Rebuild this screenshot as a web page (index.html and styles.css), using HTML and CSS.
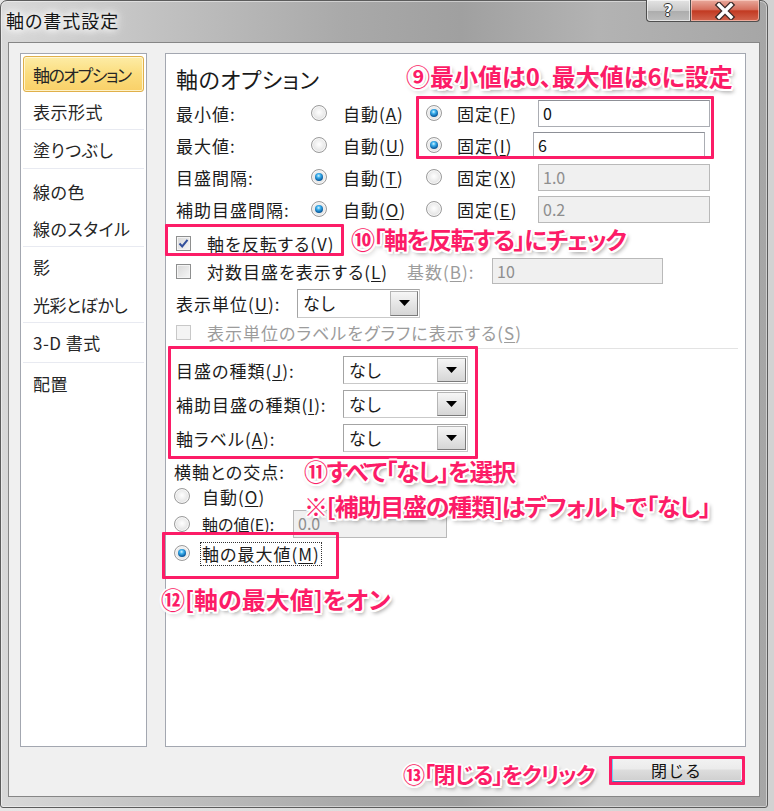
FILE: index.html
```html
<!DOCTYPE html>
<html lang="ja">
<head>
<meta charset="utf-8">
<title>軸の書式設定</title>
<link rel="stylesheet" href="styles.css">
</head>
<body>
<div class="window">
  <div class="titlebar">
    <span class="title">軸の書式設定</span>
    <div class="caption-btns">
      <span class="cbtn help">?</span>
      <span class="cbtn close"><svg width="22" height="18" viewBox="0 0 22 18"><path d="M5 3 L17 15 M17 3 L5 15" stroke="#3b2a28" stroke-width="6" stroke-linecap="square"/><path d="M5 3 L17 15 M17 3 L5 15" stroke="#ffffff" stroke-width="3.4" stroke-linecap="square"/></svg></span>
    </div>
  </div>
  <div class="client">
    <ul class="nav">
      <li class="sel">軸のオプション</li>
      <li class="sep">表示形式</li>
      <li class="sep">塗りつぶし</li>
      <li>線の色</li>
      <li class="sep">線のスタイル</li>
      <li>影</li>
      <li class="sep">光彩とぼかし</li>
      <li class="sep">3-D 書式</li>
      <li>配置</li>
    </ul>
    <div class="panel">
      <h2 class="heading">軸のオプション</h2>
      <div class="opt-rows">
        <div class="row h32">
          <span class="lbl w135">最小値:</span>
          <span class="radio"></span><span class="rtxt ra">自動(<u>A</u>)</span>
          <span class="radio on"></span><span class="rtxt rb">固定(<u>F</u>)</span>
          <span class="field">0</span>
        </div>
        <div class="row h32">
          <span class="lbl w135">最大値:</span>
          <span class="radio"></span><span class="rtxt ra">自動(<u>U</u>)</span>
          <span class="radio on"></span><span class="rtxt rb">固定(<u>I</u>)</span>
          <span class="field shifted">6</span>
        </div>
        <div class="row h32">
          <span class="lbl w135">目盛間隔:</span>
          <span class="radio on"></span><span class="rtxt ra">自動(<u>T</u>)</span>
          <span class="radio"></span><span class="rtxt rb">固定(<u>X</u>)</span>
          <span class="field off">1.0</span>
        </div>
        <div class="row h32">
          <span class="lbl w135">補助目盛間隔:</span>
          <span class="radio on"></span><span class="rtxt ra">自動(<u>O</u>)</span>
          <span class="radio"></span><span class="rtxt rb">固定(<u>E</u>)</span>
          <span class="field off">0.2</span>
        </div>
      </div>

      <div class="row h28 mt4">
        <span class="check on"><svg width="13" height="13" viewBox="0 0 13 13"><path d="M2.5 6.5 L5.2 9.4 L10.5 2.8" fill="none" stroke="#33509c" stroke-width="2"/></svg></span>
        <span class="ctxt">軸を反転する(<u>V</u>)</span>
      </div>
      <div class="row h28">
        <span class="check"></span>
        <span class="ctxt w200">対数目盛を表示する(<u>L</u>)</span>
        <span class="dis w85">基数(<u>B</u>):</span>
        <span class="field off w171">10</span>
      </div>
      <div class="row h32 mt2">
        <span class="lbl w121">表示単位(<u>U</u>):</span>
        <span class="select w123"><span class="val">なし</span><span class="dd"><svg width="11" height="6" viewBox="0 0 11 6"><polygon points="0,0 11,0 5.5,6" fill="#000"/></svg></span></span>
      </div>
      <div class="row h26">
        <span class="check off"></span>
        <span class="ctxt dis">表示単位のラベルをグラフに表示する(<u>S</u>)</span>
      </div>
      <div class="divider"></div>

      <div class="sel-rows">
        <div class="row h34">
          <span class="lbl w167">目盛の種類(<u>J</u>):</span>
          <span class="select w125"><span class="val">なし</span><span class="dd"><svg width="11" height="6" viewBox="0 0 11 6"><polygon points="0,0 11,0 5.5,6" fill="#000"/></svg></span></span>
        </div>
        <div class="row h34">
          <span class="lbl w167">補助目盛の種類(<u>I</u>):</span>
          <span class="select w125"><span class="val">なし</span><span class="dd"><svg width="11" height="6" viewBox="0 0 11 6"><polygon points="0,0 11,0 5.5,6" fill="#000"/></svg></span></span>
        </div>
        <div class="row h34">
          <span class="lbl w167">軸ラベル(<u>A</u>):</span>
          <span class="select w125"><span class="val">なし</span><span class="dd"><svg width="11" height="6" viewBox="0 0 11 6"><polygon points="0,0 11,0 5.5,6" fill="#000"/></svg></span></span>
        </div>
      </div>

      <div class="cross">
        <div class="row h24"><span class="lbl">横軸との交点:</span></div>
        <div class="row h26"><span class="radio"></span><span class="xtxt">自動(<u>O</u>)</span></div>
        <div class="row h30"><span class="radio"></span><span class="xtxt w91">軸の値(<u>E</u>):</span><span class="field off w154">0.0</span></div>
        <div class="row h28"><span class="radio on"></span><span class="xtxt"><span class="focus">軸の最大値(<u>M</u>)</span></span></div>
      </div>
    </div>
    <div class="footer">
      <button class="close-btn">閉じる</button>
    </div>
  </div>

  <div class="hl hl1"></div>
  <div class="hl hl2"></div>
  <div class="hl hl3"></div>
  <div class="hl hl4"></div>
  <div class="hl hl5"></div>

  <div class="note n9">⑨最小値は0、最大値は6に設定</div>
  <div class="note n10">⑩「軸を反転する」にチェック</div>
  <div class="note n11">⑪すべて「なし」を選択</div>
  <div class="note n11b">※[補助目盛の種類]はデフォルトで「なし」</div>
  <div class="note n12">⑫[軸の最大値]をオン</div>
  <div class="note n13">⑬「閉じる」をクリック</div>
</div>
</body>
</html>
```

FILE: styles.css
```css
* { box-sizing: border-box; }
html, body { margin: 0; padding: 0; }
body {
  width: 774px;
  height: 811px;
  overflow: hidden;
  background: linear-gradient(90deg, #e6e6e6, #d2d2d2);
  font-family: "Noto Sans CJK JP", "Noto Sans", sans-serif;
  font-size: 17px;
  letter-spacing: 1px;
  font-feature-settings: "palt";
  color: #1c1c1c;
}

/* ---------- window frame ---------- */
.window {
  position: relative;
  width: 768px;
  height: 808px;
  display: flex;
  flex-direction: column;
  border: 1px solid #5c5c5c;
  border-radius: 7px 7px 3px 3px;
  background: linear-gradient(90deg, #d9d9d9 0%, #c2c2c2 20%, #a9a9a9 45%, #a0a0a0 60%, #b3b3b3 78%, #a6a6a6 100%);
  box-shadow: inset 0 0 0 1px rgba(255,255,255,0.45);
  padding: 0 7px 10px 7px;
}
.titlebar {
  height: 41px;
  margin: 0 -7px;
  padding: 0 7px 0 5px;
  display: flex;
  justify-content: space-between;
  align-items: flex-start;
}
.title {
  font-size: 18px;
  letter-spacing: 1px;
  line-height: 38px;
  color: #151515;
  text-shadow: 0 0 6px #fff, 0 0 10px #fff, 0 0 14px #fff;
}
.caption-btns {
  display: flex;
  margin-top: -1px;
}
.cbtn {
  height: 22px;
  display: flex;
  align-items: center;
  justify-content: center;
  border: 1px solid #4f4f4f;
  border-top: none;
}
.cbtn.help {
  width: 44px;
  border-radius: 0 0 0 4px;
  border-right: none;
  background: linear-gradient(180deg, #e4e4e4 0%, #c9c9c9 50%, #acacac 51%, #bdbdbd 100%);
  box-shadow: inset 0 0 0 1px rgba(255,255,255,0.6);
  font-family: "DejaVu Sans", sans-serif;
  font-weight: 700;
  font-size: 15px;
  color: #fff;
  text-shadow: -1px 0 #333, 1px 0 #333, 0 -1px #333, 0 1px #333;
}
.cbtn.close {
  width: 70px;
  border-radius: 0 0 4px 0;
  background: linear-gradient(180deg, #e9a99c 0%, #d6705e 45%, #c23a22 52%, #d2654f 100%);
  box-shadow: inset 0 0 0 1px rgba(255,220,210,0.6);
}

/* ---------- client ---------- */
.client {
  flex: 1;
  background: #f0f0f0;
  border: 1px solid #868686;
  display: grid;
  grid-template-columns: 127px 581px;
  grid-template-rows: 694px auto;
  column-gap: 18px;
  row-gap: 10px;
  padding: 10px 0 0 11px;
}

/* ---------- nav ---------- */
.nav {
  list-style: none;
  margin: 0;
  padding: 1px 2px;
  background: #fff;
  border: 1px solid #a3a7b0;
}
.nav li {
  height: 38px;
  display: flex;
  align-items: center;
  padding-left: 10px;
  font-size: 17px;
  letter-spacing: 0.5px;
  white-space: nowrap;
  color: #262626;
}
.nav li.sep { border-bottom: 1px solid #e8eaf1; }
.nav li:nth-child(2) { height: 37px; }
.nav li:nth-child(3) { height: 39px; }
.nav li:nth-child(4) { height: 41px; padding-top: 4px; }
.nav li:nth-child(5) { height: 37px; }
.nav li:nth-child(6) { height: 39px; }
.nav li:nth-child(7) { height: 37px; letter-spacing: -0.5px; }
.nav li:nth-child(8) { height: 40px; }
.nav li:nth-child(9) { height: 40px; }
.nav li.sel {
  height: 36px;
  margin: 1px 0;
  padding-left: 9px;
  letter-spacing: -1.5px;
  border: 1px solid #e0b04a;
  border-radius: 3px;
  background: linear-gradient(180deg, #fdeca6 0%, #fbdd7e 50%, #f9d068 100%);
  box-shadow: inset 0 0 0 1px rgba(255,250,225,0.8);
}

/* ---------- panel ---------- */
.panel {
  background: #fff;
  border: 1px solid #a3a7b0;
  padding: 10px 0 0 10px;
}
.heading {
  margin: 0;
  height: 28px;
  line-height: 28px;
  font-size: 22px;
  font-weight: 400;
  letter-spacing: 0.5px;
  color: #1a1a1a;
}
.opt-rows { margin-top: 5px; }
.row {
  display: flex;
  align-items: center;
  white-space: nowrap;
}
.h24 { height: 24px; }
.h26 { height: 26px; }
.h28 { height: 28px; }
.h30 { height: 30px; }
.h32 { height: 32px; }
.h34 { height: 34px; }
.mt2 { margin-top: 2px; }
.mt4 { margin-top: 4px; }

u { text-decoration-thickness: 1px; text-underline-offset: 2px; }

.lbl { flex: none; }
.w85 { width: 85px; flex: none; }
.w121 { width: 121px; }
.w135 { width: 135px; }
.w167 { width: 167px; }

.rtxt { flex: none; }
.rtxt.ra { width: 99px; padding-left: 16px; }
.rtxt.rb { width: 96px; padding-left: 15px; }

/* radio */
.radio {
  flex: none;
  position: relative;
  width: 16px;
  height: 16px;
  border-radius: 50%;
  border: 1px solid #9b9b9b;
  background: radial-gradient(circle at 50% 45%, #ffffff 0%, #f1f1f1 35%, #d4d4d4 100%);
  box-shadow: inset 0 0 0 1px rgba(255,255,255,0.7);
}
.radio.on::after {
  content: "";
  position: absolute;
  left: 3px;
  top: 3px;
  width: 8px;
  height: 8px;
  border-radius: 50%;
  background: radial-gradient(circle at 45% 35%, #d6f4ff 0%, #3fb2ee 28%, #0d64a8 65%, #053a6a 100%);
}

/* checkbox */
.check {
  flex: none;
  width: 15px;
  height: 15px;
  display: flex;
  align-items: center;
  justify-content: center;
  border: 1px solid #8e8f8f;
  background: linear-gradient(135deg, #d8d8d8 0%, #f6f6f6 100%);
  box-shadow: inset 0 0 0 1px #f4f4f4;
}
.check.off {
  border-color: #c8c8c8;
  background: #f4f4f4;
}
.ctxt { padding-left: 16px; flex: none; }
.ctxt.w200 { width: 216px; }
.dis { color: #9c9c9c; }

/* text fields */
.field {
  flex: none;
  width: 172px;
  height: 27px;
  border: 1px solid #abadb3;
  border-top-color: #8d9097;
  background: #fff;
  padding-left: 4px;
  font-size: 16px;
  letter-spacing: 0;
  line-height: 25px;
  color: #111;
}
.field.shifted { margin-left: -5px; }
.field.off {
  background: #f0f0f0;
  border-color: #b9b9b9;
  color: #8e8e8e;
}
.field.w171 { width: 171px; height: 26px; }
.field.w154 { width: 154px; height: 28px; }

/* select */
.select {
  flex: none;
  display: flex;
  height: 29px;
  border: 1px solid #a4a4a4;
  border-bottom-color: #c9c9c9;
  border-right-color: #c9c9c9;
  background: #fff;
}
.w123 { width: 123px; }
.w125 { width: 125px; height: 28px; }
.select .val {
  flex: 1;
  padding-left: 5px;
  line-height: 26px;
  font-size: 17px;
}
.select .dd {
  width: 28px;
  margin: 1px;
  display: flex;
  align-items: center;
  justify-content: center;
  border: 1px solid #7b7b7b;
  border-top-color: #b5b5b5;
  border-left-color: #b5b5b5;
  background: linear-gradient(180deg, #f6f6f6 0%, #e6e6e6 50%, #d6d6d6 100%);
}
.w125 .dd { width: 29px; }

.divider {
  margin-top: 3px;
  width: 562px;
  height: 1px;
  background: #e3e3e3;
}
.sel-rows { margin-top: 4px; }

/* cross section */
.cross { margin-top: 4px; margin-left: -2px; }
.xtxt { padding-left: 12px; flex: none; }
.xtxt.w91 {
  width: 103px;
  font-size: 16px;
  letter-spacing: 0;
}
.focus {
  display: inline-block;
  outline: 1px dotted #333;
  outline-offset: 1px;
  line-height: 20px;
}

/* footer */
.footer {
  grid-column: 1 / -1;
  display: flex;
  justify-content: flex-end;
  padding-right: 3px;
  align-items: flex-start;
}
.close-btn {
  width: 133px;
  height: 25px;
  font-family: inherit;
  font-size: 16px;
  letter-spacing: 1px;
  color: #111;
  border: 1px solid #3c7fb1;
  border-radius: 3px;
  background: linear-gradient(180deg, #f3f3f3 0%, #ebebeb 48%, #dddddd 52%, #cfcfcf 100%);
  box-shadow: inset 2px 0 0 #6ad0f7, inset 0 0 0 1px #e8f5fc;
  padding: 0;
}

/* ---------- annotations ---------- */
.hl {
  position: absolute;
  border: 3px solid #fc1c67;
  border-radius: 1px;
}
.hl1 { left: 415px; top: 95px; width: 298px; height: 63px; }
.hl2 { left: 164px; top: 223px; width: 179px; height: 32px; }
.hl3 { left: 167px; top: 345px; width: 310px; height: 113px; }
.hl4 { left: 161px; top: 531px; width: 177px; height: 47px; }
.hl5 { left: 608px; top: 755px; width: 136px; height: 29px; }

.note {
  position: absolute;
  font-size: 24px;
  font-weight: 700;
  letter-spacing: 0;
  line-height: 24px;
  white-space: nowrap;
  color: #fc1c67;
  text-shadow:
    -1.5px -1.5px 0 #fff, 1.5px -1.5px 0 #fff, -1.5px 1.5px 0 #fff, 1.5px 1.5px 0 #fff,
    0 -2px 0 #fff, 0 2px 0 #fff, -2px 0 0 #fff, 2px 0 0 #fff,
    2px 3px 4px rgba(0,0,0,0.45);
}
.n9 { left: 405px; top: 63px; }
.n10 { left: 350px; top: 226px; letter-spacing: -1.5px; }
.n11 { left: 303px; top: 458px; letter-spacing: -1.5px; }
.n11b { left: 303px; top: 493px; letter-spacing: -1.2px; }
.n12 { left: 160px; top: 586px; }
.n13 { left: 402px; top: 760px; font-size: 22px; letter-spacing: -1.2px; }
```
